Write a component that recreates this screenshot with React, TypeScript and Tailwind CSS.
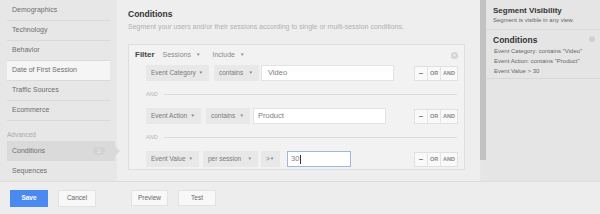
import React from "react";

const Drop = ({ label, w }: { label: string; w: number }) => (
  <div
    className="flex h-[16px] items-center justify-between bg-[#e8e8e8] pl-[5px] pr-[6px] text-[6.5px] text-[#7a7a7a]"
    style={{ width: w }}
  >
    <span>{label}</span>
    <span className="text-[4.5px] text-[#888]">▼</span>
  </div>
);

const Ops = () => (
  <div className="flex h-[15px] items-stretch border border-[#e0e0e0] bg-[#f9f9f9] text-[5.5px] font-bold text-[#8a8a8a]">
    <div className="flex w-[13px] items-center justify-center border-r border-[#e4e4e4] text-[8px] leading-none text-[#666]">–</div>
    <div className="flex w-[13px] items-center justify-center border-r border-[#e4e4e4]">OR</div>
    <div className="flex w-[16px] items-center justify-center">AND</div>
  </div>
);

const AndSep = () => (
  <div className="flex h-[27px] items-center pl-[17px] pr-[7px]">
    <span className="text-[5.5px] text-[#b5b5b5]">AND</span>
    <div className="ml-[6px] h-px flex-1 bg-[#dcdcdc]" />
  </div>
);

const SideItem = ({ label, active }: { label: string; active?: boolean }) => (
  <div
    className={`flex h-[20px] items-center border-b border-[#dadada] pl-[5px] text-[7px] text-[#6e6e6e] ${active ? "bg-[#f5f5f5]" : ""}`}
  >
    {label}
  </div>
);

export default function App() {
  return (
    <div
      className="flex h-[214px] w-[600px] flex-col overflow-hidden bg-[#eeeeee]"
      style={{ fontFamily: '"Liberation Sans", Arial, sans-serif' }}
    >
      <div className="flex h-[181px]">
        {/* Sidebar */}
        <div className="w-[117px] bg-[#e7e7e7] pl-[7px] pt-[1px]">
          <div className="w-[103px]">
            <SideItem label="Demographics" />
            <SideItem label="Technology" />
            <SideItem label="Behavior" />
            <SideItem label="Date of First Session" active />
            <SideItem label="Traffic Sources" />
            <SideItem label="Ecommerce" />
          </div>
          <div className="flex h-[20px] items-end pb-[1px] text-[6.5px] text-[#aaa]">Advanced</div>
          <div className="relative flex h-[20px] w-[108px] items-center justify-between bg-[#dadada] pl-[5px] pr-[10px] text-[7px] text-[#6e6e6e]">
            <span>Conditions</span>
            <span className="flex h-[8px] w-[12px] items-center justify-center rounded-full bg-[#d2d2d2] text-[5.5px] text-[#f4f4f4]">1</span>
            <div className="absolute right-[-5px] top-[5px] h-0 w-0 border-y-[5px] border-l-[5px] border-y-transparent border-l-[#dadada]" />
          </div>
          <div className="flex h-[20px] w-[103px] items-center pl-[5px] text-[7px] text-[#6e6e6e]">Sequences</div>
        </div>

        {/* Main */}
        <div className="flex-1 bg-[#eeeeee] pl-[11px] pr-[15px]">
          <div className="pt-[9px] text-[8.5px] font-bold leading-[10px] text-[#333]">Conditions</div>
          <div className="pt-[3px] text-[7px] leading-[9px] text-[#b0b0b0]">
            Segment your users and/or their sessions according to single or multi-session conditions.
          </div>
          <div className="mt-[13px] h-[126px] border border-[#dedede] bg-[#f2f2f2]">
            <div className="flex h-[20px] items-center pl-[6px] pr-[6px]">
              <span className="text-[8px] font-bold text-[#444]">Filter</span>
              <span className="ml-[8px] text-[7px] text-[#8a8a8a]">Sessions</span>
              <span className="ml-[5px] text-[4.5px] text-[#888]">▼</span>
              <span className="ml-[12px] text-[7px] text-[#8a8a8a]">Include</span>
              <span className="ml-[5px] text-[4.5px] text-[#888]">▼</span>
              <div className="ml-auto flex h-[7px] w-[7px] items-center justify-center rounded-full bg-[#d4d4d4] text-[5px] leading-none text-white">×</div>
            </div>
            <div className="flex items-center justify-between pl-[17px] pr-[6px]">
              <div className="flex items-center">
                <Drop label="Event Category" w={63} />
                <div className="ml-[5px]"><Drop label="contains" w={45} /></div>
                <div className="ml-[2px] flex h-[16px] w-[133px] items-center border border-[#e2e2e2] bg-white pl-[6px] text-[7.5px] text-[#808080]">Video</div>
              </div>
              <Ops />
            </div>
            <AndSep />
            <div className="flex items-center justify-between pl-[17px] pr-[6px]">
              <div className="flex items-center">
                <Drop label="Event Action" w={55} />
                <div className="ml-[5px]"><Drop label="contains" w={44} /></div>
                <div className="ml-[3px] flex h-[16px] w-[133px] items-center border border-[#e2e2e2] bg-white pl-[4px] text-[7.5px] text-[#808080]">Product</div>
              </div>
              <Ops />
            </div>
            <AndSep />
            <div className="flex items-center justify-between pl-[17px] pr-[6px]">
              <div className="flex items-center">
                <Drop label="Event Value" w={53} />
                <div className="ml-[4px]"><Drop label="per session" w={55} /></div>
                <div className="ml-[3px]"><Drop label=">" w={19} /></div>
                <div className="ml-[7px] flex h-[16px] w-[64px] items-center border border-[#9fb8dc] bg-white pl-[3px] text-[7.5px] text-[#808080]">
                  30<span className="ml-[1px] h-[9px] w-px bg-[#333]" />
                </div>
              </div>
              <Ops />
            </div>
          </div>
        </div>

        {/* scrollbar strip */}
        <div className="w-[6px] bg-[#e6e6e6]">
          <div className="h-[160px] bg-[#c2c2c2]" />
        </div>

        {/* Right panel */}
        <div className="w-[114px] bg-[#e5e5e5] text-[#333]">
          <div className="h-[30px] border-b border-[#d8d8d8] pl-[7px] pt-[6px]">
            <div className="text-[8px] font-bold leading-[10px]">Segment Visibility</div>
            <div className="text-[6px] leading-[8px] text-[#666]">Segment is visible in any view.</div>
          </div>
          <div className="relative h-[49px] border-b border-[#d8d8d8] pl-[7px] pt-[5px]">
            <div className="text-[8.5px] font-bold leading-[11px]">Conditions</div>
            <div className="absolute right-[5px] top-[6px] h-[6px] w-[6px] rounded-full bg-[#d0d0d0]" />
            <div className="pl-[1px] text-[6px] leading-[10px] text-[#666]">
              <div>Event Category: contains "Video"</div>
              <div>Event Action: contains "Product"</div>
              <div>Event Value &gt; 30</div>
            </div>
          </div>
        </div>
      </div>

      {/* Footer */}
      <div className="flex h-[33px] items-center border-t border-[#dcdcdc] bg-[#ededed] pl-[10px]">
        <div className="flex h-[17px] w-[38px] items-center justify-center bg-[#4a8af0] text-[6.5px] font-bold text-white">Save</div>
        <div className="ml-[10px] flex h-[17px] w-[38px] items-center justify-center border border-[#e2e2e2] bg-[#f8f8f8] text-[6.5px] text-[#666]">Cancel</div>
        <div className="ml-[35px] flex h-[16px] w-[37px] items-center justify-center border border-[#e2e2e2] bg-[#f8f8f8] text-[6.5px] text-[#666]">Preview</div>
        <div className="ml-[10px] flex h-[16px] w-[38px] items-center justify-center border border-[#e2e2e2] bg-[#f8f8f8] text-[6.5px] text-[#666]">Test</div>
      </div>
    </div>
  );
}
